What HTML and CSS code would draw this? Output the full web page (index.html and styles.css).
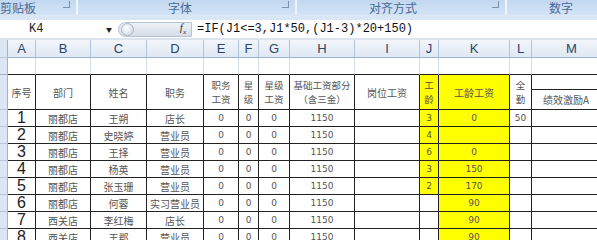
FILE: index.html
```html
<!DOCTYPE html>
<html lang="zh">
<head>
  <meta charset="UTF-8">
  <title>工龄工资</title>
  <link rel="stylesheet" href="styles.css">
</head>
<body>
<div class="ribbon">
  <div class="group g-clip"><span class="label">剪贴板</span><i class="launch"></i></div>
  <div class="group g-font"><span class="label">字体</span><i class="launch"></i></div>
  <div class="group g-align"><span class="label">对齐方式</span><i class="launch"></i></div>
  <div class="group g-num"><span class="label">数字</span></div>
</div>
<div class="fbar">
  <div class="namebox"><span class="ref">K4</span><span class="drop">&#9660;</span></div>
  <div class="pill"><i class="knob"></i><span class="fx">f<sub>x</sub></span></div>
  <div class="formula">=IF(J1&lt;=3,J1*50,(J1-3)*20+150)</div>
</div>
<table class="sheet">
  <colgroup>
    <col class="c-rh"><col class="c-a"><col class="c-b"><col class="c-c"><col class="c-d"><col class="c-e"><col class="c-f"><col class="c-g"><col class="c-h"><col class="c-i"><col class="c-j"><col class="c-k"><col class="c-l"><col class="c-m">
  </colgroup>
  <tr class="r-cols">
    <th class="rh"></th><th>A</th><th>B</th><th>C</th><th>D</th><th>E</th><th>F</th><th>G</th><th>H</th><th>I</th><th>J</th><th>K</th><th>L</th><th>M</th>
  </tr>
  <tr class="r-blank">
    <td class="rh"></td><td></td><td></td><td></td><td></td><td></td><td></td><td></td><td></td><td></td><td></td><td></td><td></td><td></td>
  </tr>
  <tr class="r-head1">
    <td class="rh" rowspan="2"></td>
    <td rowspan="2" class="t">序号</td>
    <td rowspan="2" class="t">部门</td>
    <td rowspan="2" class="t">姓名</td>
    <td rowspan="2" class="t">职务</td>
    <td rowspan="2" class="t two">职务<br>工资</td>
    <td rowspan="2" class="t two">星<br>级</td>
    <td rowspan="2" class="t two">星级<br>工资</td>
    <td rowspan="2" class="t two">基础工资部分<br>（含三金）</td>
    <td rowspan="2" class="t">岗位工资</td>
    <td rowspan="2" class="t two y">工<br>龄</td>
    <td rowspan="2" class="t y">工龄工资</td>
    <td rowspan="2" class="t two">全<br>勤</td>
    <td class="t"></td>
  </tr>
  <tr class="r-head2">
    <td class="t left">绩效激励A</td>
  </tr>
  <tr class="r-data"><td class="rh"></td><td class="no">1</td><td class="t">丽都店</td><td class="t">王朔</td><td class="t">店长</td><td class="n">0</td><td class="n">0</td><td class="n">0</td><td class="n">1150</td><td></td><td class="n y">3</td><td class="n y">0</td><td class="n">50</td><td></td></tr>
  <tr class="r-data"><td class="rh"></td><td class="no">2</td><td class="t">丽都店</td><td class="t">史晓婷</td><td class="t">营业员</td><td class="n">0</td><td class="n">0</td><td class="n">0</td><td class="n">1150</td><td></td><td class="n y">4</td><td class="n y"></td><td></td><td></td></tr>
  <tr class="r-data"><td class="rh"></td><td class="no">3</td><td class="t">丽都店</td><td class="t">王择</td><td class="t">营业员</td><td class="n">0</td><td class="n">0</td><td class="n">0</td><td class="n">1150</td><td></td><td class="n y">6</td><td class="n y">0</td><td></td><td></td></tr>
  <tr class="r-data"><td class="rh"></td><td class="no">4</td><td class="t">丽都店</td><td class="t">杨英</td><td class="t">营业员</td><td class="n">0</td><td class="n">0</td><td class="n">0</td><td class="n">1150</td><td></td><td class="n y">3</td><td class="n y">150</td><td></td><td></td></tr>
  <tr class="r-data"><td class="rh"></td><td class="no">5</td><td class="t">丽都店</td><td class="t">张玉珊</td><td class="t">营业员</td><td class="n">0</td><td class="n">0</td><td class="n">0</td><td class="n">1150</td><td></td><td class="n y">2</td><td class="n y">170</td><td></td><td></td></tr>
  <tr class="r-data"><td class="rh"></td><td class="no">6</td><td class="t">丽都店</td><td class="t">何蓉</td><td class="t">实习营业员</td><td class="n">0</td><td class="n">0</td><td class="n">0</td><td class="n">1150</td><td></td><td></td><td class="n y">90</td><td></td><td></td></tr>
  <tr class="r-data"><td class="rh"></td><td class="no">7</td><td class="t">西关店</td><td class="t">李红梅</td><td class="t">店长</td><td class="n">0</td><td class="n">0</td><td class="n">0</td><td class="n">1150</td><td></td><td></td><td class="n y">90</td><td></td><td></td></tr>
  <tr class="r-data"><td class="rh"></td><td class="no">8</td><td class="t">西关店</td><td class="t">王郡</td><td class="t">营业员</td><td class="n">0</td><td class="n">0</td><td class="n">0</td><td class="n">1150</td><td></td><td></td><td class="n y">90</td><td></td><td></td></tr>
</table>
</body>
</html>
```

FILE: styles.css
```css
html,
body {
  margin: 0;
  padding: 0;
  width: 597px;
  height: 240px;
  overflow: hidden;
  background: #fff;
  font-family: 'Noto Sans CJK SC', sans-serif;
}

/* ribbon group captions */
.ribbon {
  display: flex;
  height: 15px;
  background: linear-gradient(#c2d8f0, #d3e3f6);
  border-bottom: 5px solid #d9e6f5;
}
.group {
  display: flex;
  align-items: center;
  height: 15px;
  border-right: 2px solid #eef4fb;
  box-sizing: border-box;
}
.label {
  font-size: 12px;
  line-height: 15px;
  color: #4a6894;
}
.g-clip {
  width: 78px;
}
.g-clip .label {
  flex: 1;
}
.g-font {
  width: 219px;
}
.g-font .label {
  flex: 1;
  padding-left: 90px;
}
.g-align {
  width: 210px;
}
.g-align .label {
  flex: 1;
  padding-left: 72px;
}
.g-num {
  flex: 1;
  border-right: 0;
}
.g-num .label {
  padding-left: 42px;
}
.launch {
  width: 6px;
  height: 6px;
  margin: 0 6px 6px 0;
  border-right: 1px solid #7d93b3;
  border-bottom: 1px solid #7d93b3;
}

/* formula bar */
.fbar {
  display: flex;
  align-items: center;
  height: 18px;
  background: #fff;
  border-bottom: 2px solid #dbe4ef;
}
.namebox {
  display: flex;
  align-items: center;
  width: 118px;
}
.ref {
  font-family: 'Liberation Mono', monospace;
  font-size: 12px;
  color: #222;
  padding-left: 29px;
  flex: 1;
}
.drop {
  font-size: 6px;
  color: #222;
  margin-right: 6px;
}
.pill {
  display: flex;
  align-items: center;
  justify-content: space-between;
  width: 74px;
  height: 15px;
  border-radius: 8px 0 0 8px;
  background: linear-gradient(#eef1f6, #d6dde8);
  border: 1px solid #b7c3d3;
  box-sizing: border-box;
}
.knob {
  width: 11px;
  height: 11px;
  margin-left: 2px;
  border-radius: 50%;
  background: radial-gradient(circle at 40% 40%, #fff, #c9d2de);
  border: 1px solid #a9b6c8;
}
.fx {
  font-family: 'Liberation Serif', serif;
  font-style: italic;
  font-size: 11px;
  color: #333;
  margin-right: 5px;
}
.fx sub {
  font-size: 7px;
}
.formula {
  flex: 1;
  padding-left: 5px;
  font-family: 'Liberation Mono', monospace;
  font-size: 12px;
  color: #111;
  white-space: nowrap;
}

/* sheet */
.sheet {
  table-layout: fixed;
  border-collapse: separate;
  border-spacing: 0;
  width: 612px;
}
.sheet th,
.sheet td {
  padding: 0;
  text-align: center;
  overflow: hidden;
  white-space: nowrap;
  border-right: 1px solid #222;
  border-bottom: 1px solid #222;
}
.c-rh { width: 8px; }
.c-a { width: 28px; }
.c-b { width: 55px; }
.c-c { width: 56px; }
.c-d { width: 57px; }
.c-e { width: 35px; }
.c-f { width: 20px; }
.c-g { width: 31px; }
.c-h { width: 65px; }
.c-i { width: 65px; }
.c-j { width: 19px; }
.c-k { width: 71px; }
.c-l { width: 22px; }
.c-m { width: 80px; }

.r-cols {
  height: 18px;
}
.r-cols th {
  font-family: 'Liberation Sans', sans-serif;
  font-weight: 400;
  font-size: 13px;
  line-height: 17px;
  color: #2b4468;
  background: linear-gradient(#f3f6fb, #dfe8f4);
  border-right: 1px solid #b2c3da;
  border-bottom: 1px solid #9db3cf;
}
.sheet .rh {
  background: #dce6f3;
  border-right: 1px solid #9db3cf;
  border-bottom: 1px solid #b7c8de;
}
.r-blank {
  height: 17px;
}
.r-blank td {
  border-right: 1px solid #d3dbe6;
}
.r-blank td.rh {
  border-bottom: 1px solid #9db3cf;
}
.r-head1 {
  height: 15px;
}
.r-head2 {
  height: 20px;
}
.r-data {
  height: 17px;
}
.t {
  font-size: 10px;
  line-height: 13px;
  color: #555;
}
.two {
  font-size: 9.5px;
  line-height: 14px;
}
.left {
  text-align: left !important;
  padding-left: 11px !important;
}
.n {
  font-family: 'DejaVu Sans', sans-serif;
  font-size: 9px;
  line-height: 12px;
  color: #555;
}
.no {
  font-family: 'Liberation Sans', sans-serif;
  font-size: 16px;
  line-height: 16px;
  color: #222;
}
.y {
  background: #ffff00;
}
```
